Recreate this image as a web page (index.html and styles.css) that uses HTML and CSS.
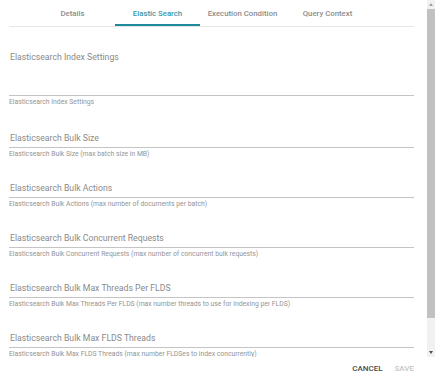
FILE: index.html
```html
<!DOCTYPE html>
<html lang="en">
<head>
  <meta charset="UTF-8" />
  <meta name="viewport" content="width=device-width, initial-scale=1.0" />
  <title>Elastic Search Settings</title>
  <link rel="stylesheet" href="styles.css">
</head>
<body>

  <div class="dialog">
    <div class="scroll-area">
      <div class="dialog-content">

        <!-- Tabs -->
        <div class="tabs">
          <div class="tab">Details</div>
          <div class="tab active">Elastic Search</div>
          <div class="tab">Execution Condition</div>
          <div class="tab">Query Context</div>
        </div>

        <div class="fields">
          <div class="field">
            <div class="field-input tall">Elasticsearch Index Settings</div>
            <div class="field-hint">Elasticsearch Index Settings</div>
          </div>
          <div class="field">
            <div class="field-input">Elasticsearch Bulk Size</div>
            <div class="field-hint">Elasticsearch Bulk Size (max batch size in MB)</div>
          </div>
          <div class="field">
            <div class="field-input">Elasticsearch Bulk Actions</div>
            <div class="field-hint">Elasticsearch Bulk Actions (max number of documents per batch)</div>
          </div>
          <div class="field">
            <div class="field-input">Elasticsearch Bulk Concurrent Requests</div>
            <div class="field-hint">Elasticsearch Bulk Concurrent Requests (max number of concurrent bulk requests)</div>
          </div>
          <div class="field">
            <div class="field-input">Elasticsearch Bulk Max Threads Per FLDS</div>
            <div class="field-hint">Elasticsearch Bulk Max Threads Per FLDS (max number threads to use for indexing per FLDS)</div>
          </div>
          <div class="field">
            <div class="field-input">Elasticsearch Bulk Max FLDS Threads</div>
            <div class="field-hint">Elasticsearch Bulk Max FLDS Threads (max number FLDSes to index concurrently)</div>
          </div>
        </div>

      </div>

      <!-- Scrollbar -->
      <div class="scrollbar">
        <div class="scroll-btn">
          <svg width="4" height="3" viewBox="0 0 4 3"><polygon points="2,0 4,3 0,3" fill="#a3a3a3"/></svg>
        </div>
        <div class="scroll-track">
          <div class="scroll-thumb"></div>
        </div>
        <div class="scroll-btn">
          <svg width="4" height="3" viewBox="0 0 4 3"><polygon points="0,0 4,0 2,3" fill="#505050"/></svg>
        </div>
      </div>
    </div>

    <div class="dialog-actions">
      <button class="btn">CANCEL</button>
      <button class="btn disabled">SAVE</button>
    </div>
  </div>

</body>
</html>
```

FILE: styles.css
```css
* {
  margin: 0;
  padding: 0;
  box-sizing: border-box;
  font-family: 'Roboto', 'Liberation Sans', sans-serif;
}
body {
  background: #fff;
  width: 435px;
  height: 378px;
  overflow: hidden;
}
.dialog {
  display: flex;
  flex-direction: column;
  height: 378px;
}
.scroll-area {
  display: flex;
  height: 357px;
}
.dialog-content {
  flex: 1;
  overflow: hidden;
  padding: 0 13px 0 9px;
}
/* Scrollbar */
.scrollbar {
  width: 8px;
  display: flex;
  flex-direction: column;
  background: #f1f1f1;
}
.scroll-btn {
  height: 9px;
  display: flex;
  align-items: center;
  justify-content: center;
}
.scroll-btn svg {
  display: block;
}
.scroll-track {
  flex: 1;
}
.scroll-thumb {
  height: 309px;
  background: #c1c1c1;
}
/* Tabs */
.tabs {
  display: flex;
  padding-left: 21px;
  border-bottom: 1px solid #e6e6e6;
}
.tab {
  width: 85px;
  height: 26px;
  padding-top: 1px;
  display: flex;
  align-items: center;
  justify-content: center;
  font-size: 7.8px;
  font-weight: 500;
  color: #8c8c8c;
  white-space: nowrap;
}
.tab.active {
  color: #3598a9;
  border-bottom: 2px solid #1f8a9c;
  padding-top: 3px;
}
/* Fields */
.fields {
  padding-top: 24px;
}
.field {
  margin-bottom: 23px;
}
.field:first-child {
  margin-bottom: 25px;
}
.field-input {
  font-size: 8.7px;
  line-height: 12px;
  color: #8a8a8a;
  padding: 0 1px 3px;
  border-bottom: 1px solid #c4c4c4;
  white-space: nowrap;
}
.field-input.tall {
  padding-bottom: 32px;
}
.field-hint {
  font-size: 6.8px;
  line-height: 9px;
  margin-top: 2px;
  color: #949494;
  white-space: nowrap;
}
/* Actions */
.dialog-actions {
  flex: 1;
  display: flex;
  justify-content: flex-end;
  align-items: center;
  padding: 2px 15px 0 0;
}
.btn {
  background: none;
  border: none;
  font-size: 8px;
  font-weight: 500;
  color: #4a4a4a;
  padding: 4px 6px;
  cursor: pointer;
}
.btn.disabled {
  color: #c4c4c4;
  cursor: default;
}
```
